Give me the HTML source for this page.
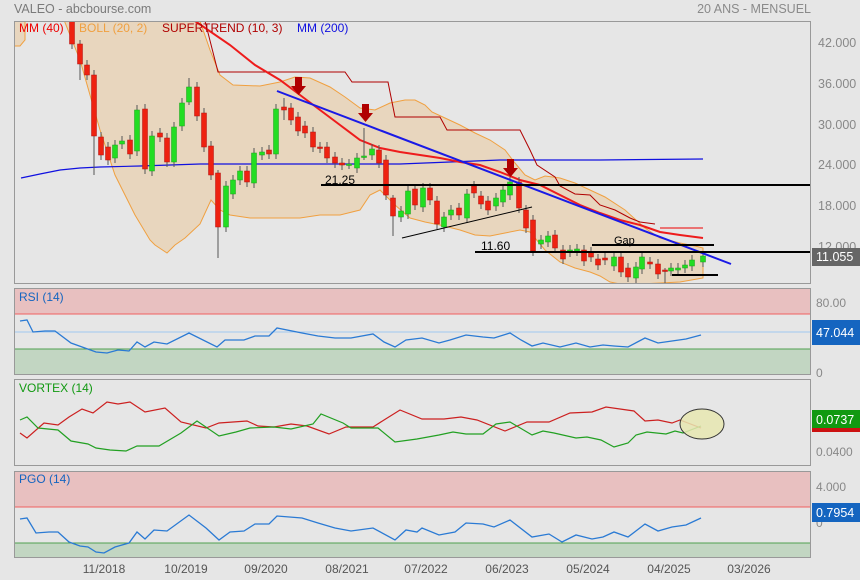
<!DOCTYPE html>
<html><head><meta charset="utf-8"><style>
html,body{margin:0;padding:0;background:#e6e6e6;}
svg{display:block;font-family:"Liberation Sans",sans-serif;}
</style></head><body>
<svg id="s" width="860" height="580" xmlns="http://www.w3.org/2000/svg">
<rect width="860" height="580" fill="#e6e6e6"/>
<text x="14" y="13" font-size="12.5" fill="#7a7a7a">VALEO - abcbourse.com</text>
<text x="811" y="13" font-size="12.5" fill="#8a8a8a" text-anchor="end">20 ANS - MENSUEL</text>
<defs><clipPath id="cm"><rect x="14" y="21" width="797" height="262"/></clipPath></defs>
<g clip-path="url(#cm)">
<polygon fill="#e8d6be" stroke="#f0a040" stroke-width="1" points="14,15 200,15 200,21 210,50 220,75 233,85 260,86 280,82 295,77 310,78 330,87 345,97 360,108 375,110 390,103 405,100 415,100 425,105 432,112 445,118 460,125 475,133 490,140 505,150 515,163 525,175 535,180 545,176 560,178 575,183 590,190 605,197 625,210 645,228 660,238 680,243 695,246 703,248 703,278 680,282 660,283 640,284 620,284 610,282 600,276 590,272 575,268 560,262 545,250 530,232 520,230 505,233 490,236 475,235 460,230 440,225 425,222 410,218 395,205 380,190 370,195 360,210 340,215 320,215 300,218 280,218 250,218 230,215 220,210 211,200 200,224 185,238 175,245 167,253 155,245 150,240 135,215 115,175 100,130 80,60 62,15 25,15 25,40 20,46 14,46"/>
<polyline fill="none" stroke="#1010e0" stroke-width="1.2" points="21,178 40,174 60,170 80,168 100,167 140,166 200,164 300,164 400,164 500,160 600,160 703,159"/>
<polyline fill="none" stroke="#b00000" stroke-width="1" points="205,21 218,72 345,72 352,82 388,82 395,117 440,117 447,130 520,130 530,150 537,165 555,177 560,186 575,194 590,195 600,205 615,210 630,218 640,222 655,224"/>
<line x1="660" y1="228" x2="703" y2="228" stroke="#e00" stroke-width="1"/>
<polyline fill="none" stroke="#ee1c1c" stroke-width="2" points="195,21 230,45 255,65 280,80 300,95 320,110 340,125 360,140 380,148 400,152 420,155 440,158 460,162 480,165 500,172 520,180 540,185 560,195 580,205 600,213 620,220 640,225 660,232 680,235 703,238"/>
<g id="cd"></g>
<line x1="277" y1="91" x2="731" y2="264" stroke="#1a1ae6" stroke-width="2"/>
<line x1="321" y1="185" x2="811" y2="185" stroke="#000" stroke-width="2"/>
<line x1="475" y1="252" x2="811" y2="252" stroke="#000" stroke-width="2"/>
<line x1="592" y1="245" x2="714" y2="245" stroke="#000" stroke-width="2"/>
<line x1="672" y1="275" x2="718" y2="275" stroke="#000" stroke-width="2"/>
<line x1="402" y1="238" x2="532" y2="207" stroke="#000" stroke-width="1"/>
<text x="325" y="184" font-size="12" fill="#000">21.25</text>
<text x="481" y="250" font-size="12" fill="#000">11.60</text>
<text x="614" y="244" font-size="11" fill="#000">Gap</text>
<g fill="#b00000">
<polygon points="295,77 302,77 302,86 306,86 298.5,95 291,86 295,86"/>
<polygon points="362,104 369,104 369,113 373,113 365.5,122 358,113 362,113"/>
<polygon points="507,159 514,159 514,168 518,168 510.5,177 503,168 507,168"/>
</g>
</g>
<rect x="14.5" y="21.5" width="796" height="262" fill="none" stroke="#999"/>
<text x="19" y="32" font-size="12" fill="#e00">MM (40)</text>
<text x="79" y="32" font-size="12" fill="#f0a040">BOLL (20, 2)</text>
<text x="162" y="32" font-size="12" fill="#b00000">SUPERTREND (10, 3)</text>
<text x="297" y="32" font-size="12" fill="#1010e0">MM (200)</text>
<g font-size="12.5" fill="#888">
<text x="818" y="47">42.000</text><text x="818" y="88">36.000</text><text x="818" y="129">30.000</text><text x="818" y="169">24.000</text><text x="818" y="210">18.000</text><text x="818" y="251">12.000</text>
</g>
<rect x="812" y="248" width="48" height="18" fill="#666"/>
<text x="816" y="261" font-size="12.5" fill="#fff">11.055</text>

<rect x="14" y="288" width="797" height="26" fill="#e8c0c0"/>
<rect x="14" y="349" width="797" height="26" fill="#c2d6c2"/>
<line x1="14" y1="314" x2="811" y2="314" stroke="#f06060"/>
<line x1="14" y1="349" x2="811" y2="349" stroke="#50a050"/>
<line x1="14" y1="332" x2="811" y2="332" stroke="#a0c8f0"/>
<polyline fill="none" stroke="#2a7ad4" stroke-width="1.3" points="20,321 27,320 33,332 45,331 55,331 71,343 96,352 107,353 118,350 129,351 137,342 145,347 154,342 167,344 189,333 217,347 225,340 244,340 255,336 269,336 277,328 302,333 318,336 335,338 351,338 373,334 384,342 395,347 406,340 422,338 439,343 450,340 466,335 483,337 494,338 510,333 521,340 532,346 543,343 560,347 576,343 590,347 603,345 614,346 628,347 645,338 658,343 672,341 686,339 701,335"/>
<rect x="14.5" y="288.5" width="796" height="86" fill="none" stroke="#999"/>
<text x="19" y="301" font-size="12" fill="#1565c0">RSI (14)</text>
<g font-size="12" fill="#888"><text x="816" y="307">80.00</text><text x="816" y="344">40.000</text><text x="816" y="377">0</text></g>
<rect x="812" y="320" width="48" height="25" fill="#1565c0"/>
<text x="816" y="337" font-size="12.5" fill="#fff">47.044</text>

<rect x="14.5" y="379.5" width="796" height="86" fill="none" stroke="#999"/>
<text x="19" y="392" font-size="12" fill="#119911">VORTEX (14)</text>
<polyline fill="none" stroke="#cc2020" stroke-width="1.2" points="20,433 27,438 44,423 58,425 69,417 82,409 93,413 107,402 118,404 130,402 145,412 165,408 181,422 206,428 219,423 247,421 258,426 274,427 291,424 307,426 329,434 346,427 373,427 384,420 400,410 422,419 444,419 461,417 477,420 505,431 527,422 549,422 570,413 592,412 606,407 634,411 645,421 658,420 672,423 680,420 701,428"/>
<polyline fill="none" stroke="#22a022" stroke-width="1.2" points="20,420 27,417 38,428 58,430 71,441 88,444 96,448 110,450 126,451 137,446 159,446 181,433 197,421 219,436 236,432 250,428 274,427 291,429 313,424 321,414 343,423 351,428 378,428 395,442 417,439 439,435 453,432 466,434 483,434 496,424 510,422 532,435 543,431 554,433 576,438 587,437 601,440 614,447 628,443 636,435 647,432 666,434 675,431 683,433 701,426"/>
<ellipse cx="702" cy="424" rx="22" ry="15" fill="#e6e6b0" fill-opacity="0.85" stroke="#333"/>
<text x="816" y="456" font-size="12" fill="#888">0.0400</text>
<rect x="812" y="410" width="48" height="18" fill="#119911"/>
<rect x="812" y="428" width="48" height="4" fill="#cc1111"/>
<text x="816" y="424" font-size="12.5" fill="#fff">0.0737</text>

<rect x="14" y="471" width="797" height="36" fill="#e8c0c0"/>
<rect x="14" y="543" width="797" height="14" fill="#c2d6c2"/>
<line x1="14" y1="507" x2="811" y2="507" stroke="#f06060"/>
<line x1="14" y1="543" x2="811" y2="543" stroke="#50a050"/>
<polyline fill="none" stroke="#2a7ad4" stroke-width="1.3" points="20,519 27,518 36,533 49,532 58,532 69,542 80,546 88,547 96,552 104,553 115,547 129,543 137,532 145,539 154,530 167,531 189,515 206,528 219,540 230,532 244,531 255,524 269,524 277,516 302,518 318,523 335,528 351,531 373,528 395,540 406,530 417,532 422,528 439,535 455,532 466,523 483,524 494,527 510,520 532,537 549,534 562,542 576,535 592,539 603,537 614,532 628,537 645,524 658,531 672,527 686,525 701,518"/>
<rect x="14.5" y="471.5" width="796" height="86" fill="none" stroke="#999"/>
<text x="19" y="483" font-size="12" fill="#1565c0">PGO (14)</text>
<g font-size="12" fill="#888"><text x="816" y="491">4.000</text><text x="816" y="527">0</text></g>
<rect x="812" y="503" width="48" height="19" fill="#1565c0"/>
<text x="816" y="517" font-size="12.5" fill="#fff">0.7954</text>

<g font-size="12" fill="#555" text-anchor="middle">
<text x="104" y="573">11/2018</text><text x="186" y="573">10/2019</text><text x="266" y="573">09/2020</text><text x="347" y="573">08/2021</text><text x="426" y="573">07/2022</text><text x="507" y="573">06/2023</text><text x="588" y="573">05/2024</text><text x="669" y="573">04/2025</text><text x="749" y="573">03/2026</text>
</g>
</svg>
<script>
var d=[[72,'r',21,44],[80,'r',44,64,40,80],[87,'r',65,75],[94,'r',75,136,70,175],[101,'r',137,155],[108,'r',147,160],[115,'g',145,158],[122,'g',141,144],[130,'r',140,154],[137,'g',110,151],[145,'r',109,169],[152,'g',136,171],[160,'r',133,137],[167,'r',138,162],[174,'g',127,162],[182,'g',103,126],[189,'g',87,102,78,105],[197,'r',87,116],[204,'r',113,147],[211,'r',146,175],[218,'r',173,227,170,258],[226,'g',186,227],[233,'g',180,194],[240,'g',171,180],[247,'r',171,182],[254,'g',153,183],[262,'g',152,155],[269,'r',150,154],[276,'g',109,154],[284,'r',107,110,98,120],[291,'r',108,120],[298,'r',117,131],[305,'r',126,133],[313,'r',132,147],[320,'r',147,148],[327,'r',147,158],[335,'r',157,163],[342,'r',163,165],[349,'g',164,164],[357,'g',158,168],[364,'g',156,157,128,160],[372,'g',149,155],[379,'r',150,163],[386,'r',160,195],[393,'r',198,216,195,236],[401,'g',211,217],[408,'g',191,214],[415,'r',189,205],[423,'g',188,207],[430,'r',188,200],[437,'r',201,224],[444,'g',217,227],[451,'g',210,215],[459,'r',208,215],[467,'g',194,218],[474,'r',186,193],[481,'r',196,204],[488,'r',201,210],[496,'g',198,206],[503,'g',190,202],[510,'g',182,195],[519,'r',182,208],[526,'r',210,228],[533,'r',220,251],[541,'g',240,244],[548,'g',236,242],[555,'r',235,248],[563,'r',250,259],[570,'g',250,252],[577,'g',249,251],[584,'r',250,261],[591,'r',252,257],[598,'r',259,265],[605,'r',258,260],[614,'g',257,266],[621,'r',257,272],[628,'r',268,277],[636,'g',267,278],[642,'g',257,269],[650,'r',262,264],[658,'r',264,274],[665,'r',270,271,268,284],[671,'g',268,271],[678,'g',268,270],[685,'g',265,268],[692,'g',260,266],[703,'g',256,262]];
var g=document.getElementById('cd'),h='';
d.forEach(function(c){var x=c[0],t=c[2],b=c[3],wt=c[4]||t-5,wb=c[5]||b+5;
h+='<line x1="'+x+'" y1="'+wt+'" x2="'+x+'" y2="'+wb+'" stroke="#555" stroke-width="1"/>';
h+='<rect x="'+(x-2.5)+'" y="'+t+'" width="5" height="'+Math.max(b-t,1.5)+'" fill="'+(c[1]=='r'?'#ee2211':'#22dd22')+'" stroke="'+(c[1]=='r'?'#b01010':'#18a018')+'" stroke-width="0.5"/>';});
g.innerHTML=h;
</script>
</body></html>
